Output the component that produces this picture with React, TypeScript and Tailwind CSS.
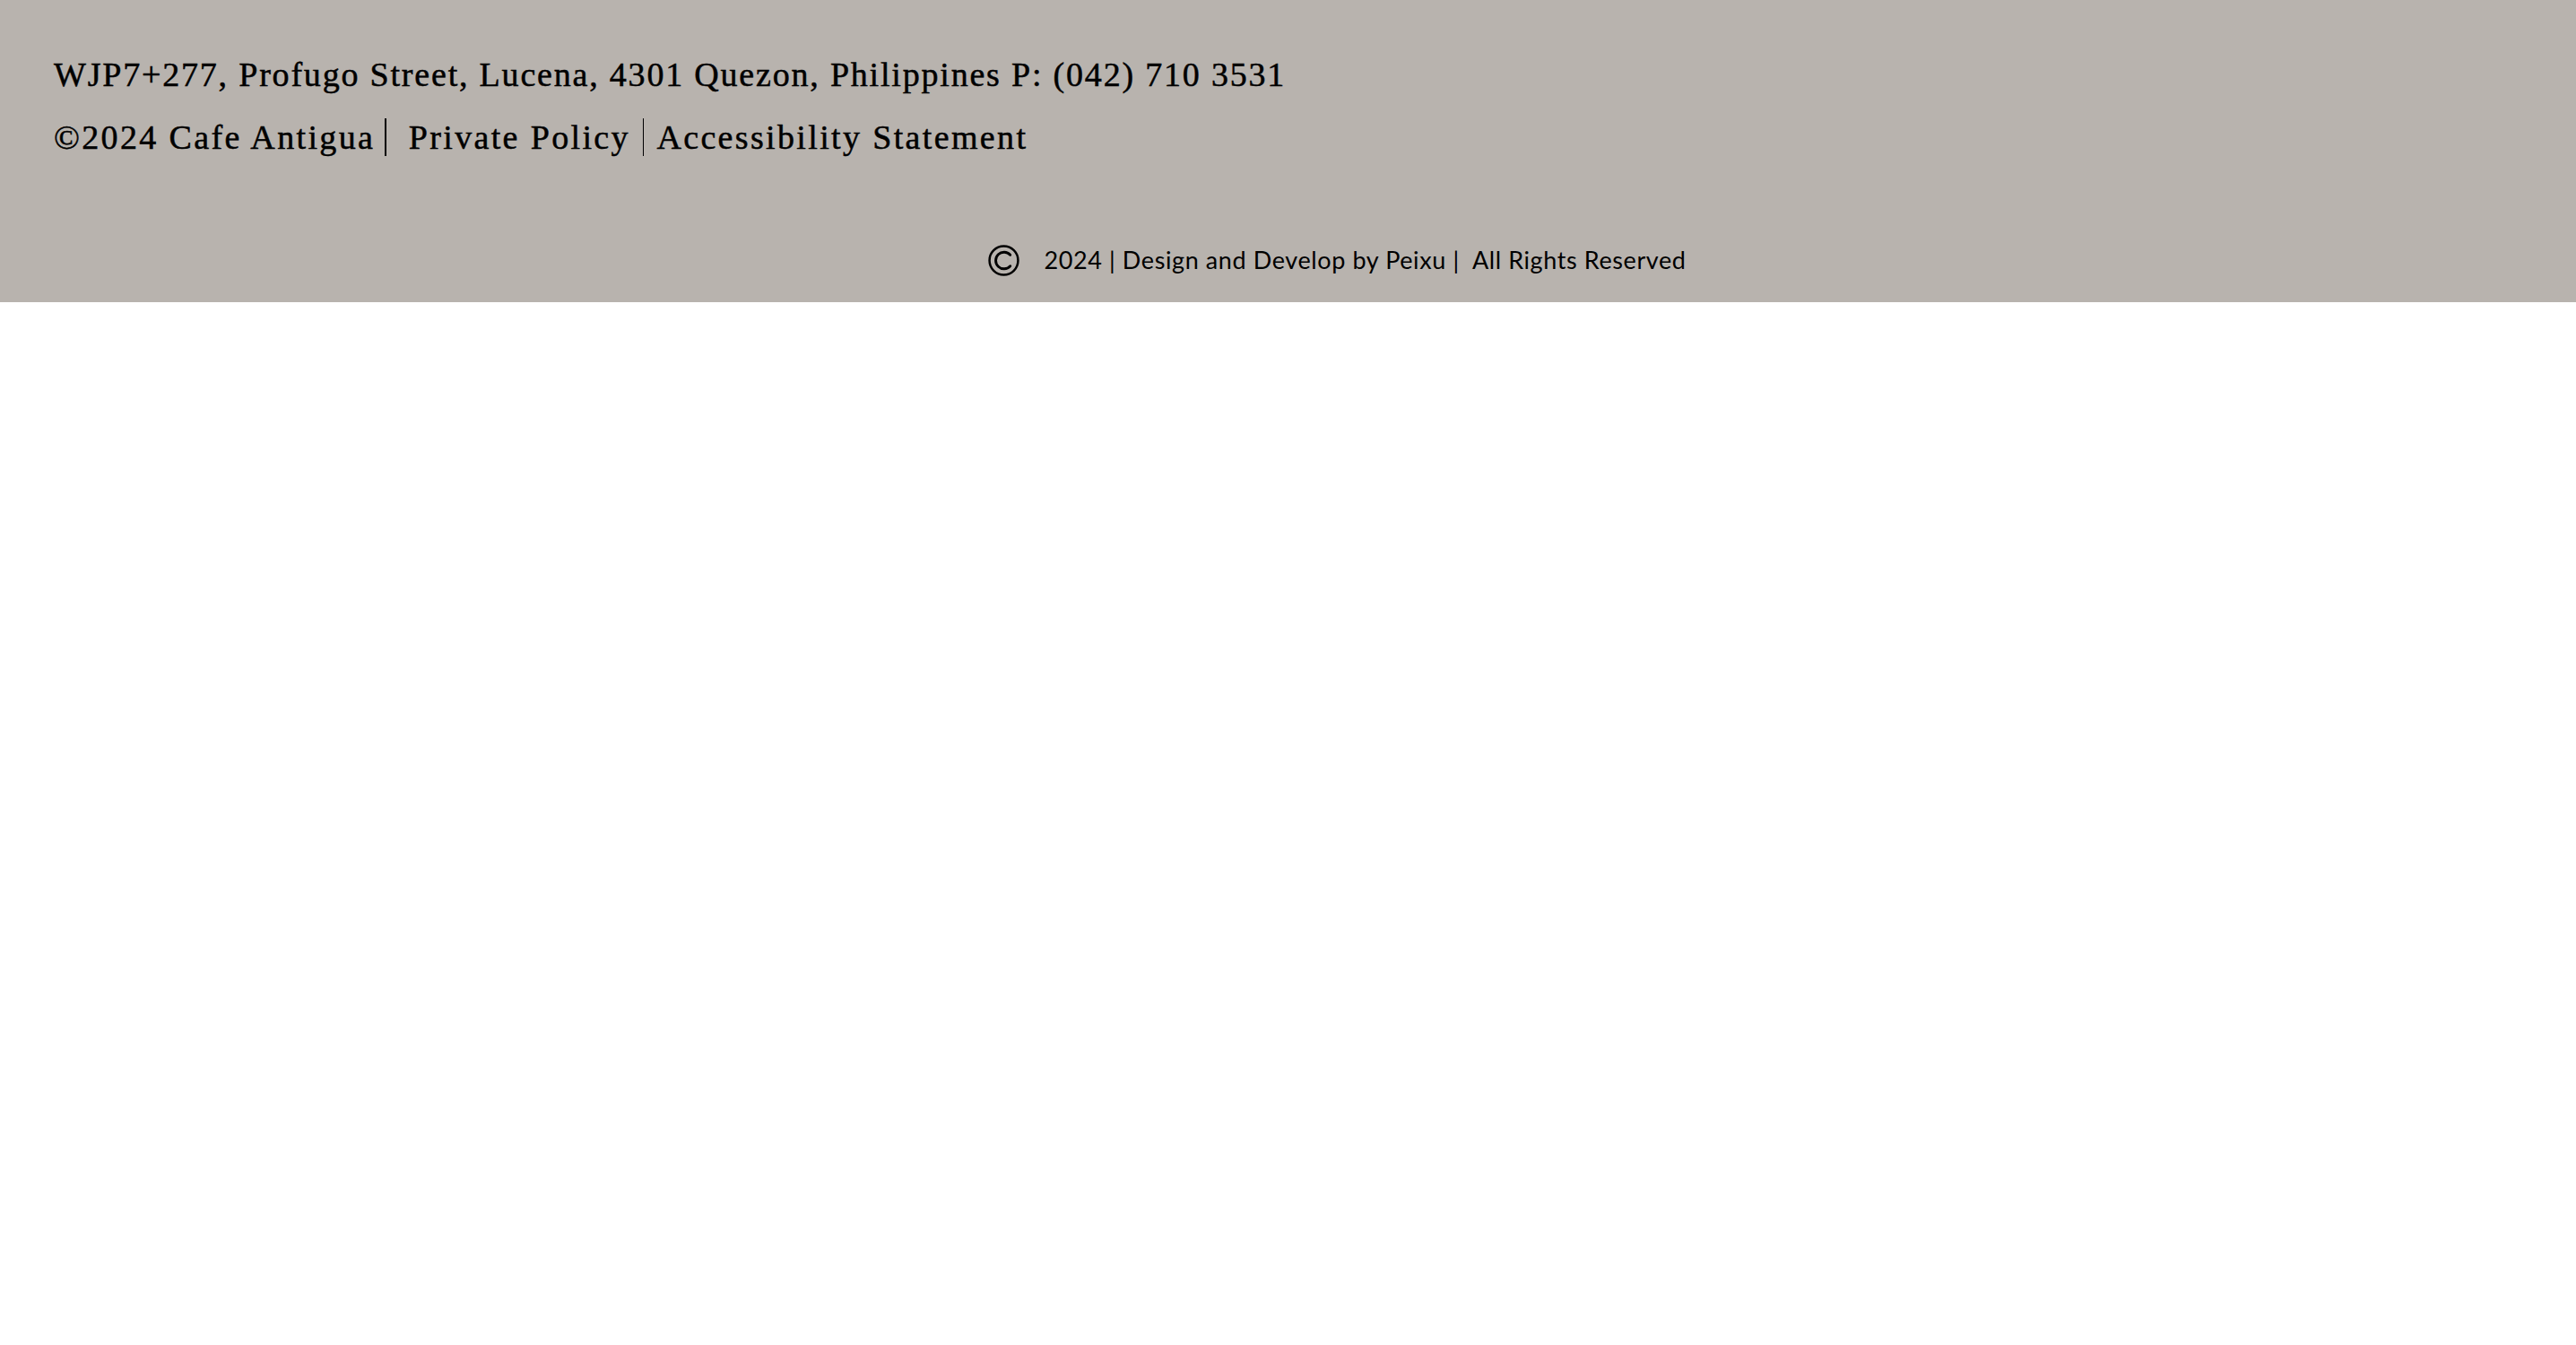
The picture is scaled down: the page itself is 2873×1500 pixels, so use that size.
export default function App() {
  return (
    <div className="min-h-screen bg-white">
      <footer className="bg-[#b8b3ae] text-black">
        <div className="pl-[60px] pt-[48px] font-['Liberation_Serif',serif] text-[38px] leading-[70px] tracking-[1.8px] [-webkit-text-stroke:0.5px_black]">
          <p>WJP7+277, Profugo Street, Lucena, 4301 Quezon, Philippines P: (042) 710 3531</p>
          <p className="flex items-center tracking-[2.35px]">
            <span>©2024 Cafe Antigua</span>
            <span className="ml-[11px] mr-[25px] h-[42px] w-[1.5px] bg-black" />
            <span>Private Policy</span>
            <span className="mx-[14px] h-[42px] w-[1.5px] bg-black" />
            <span>Accessibility Statement</span>
          </p>
        </div>
        <div className="mt-[82px] flex h-[40px] items-center justify-center pl-[110px] font-['Lato',sans-serif] text-[27px] tracking-[0.6px]">
          <svg viewBox="0 0 34 34" className="mr-[27px] h-[35px] w-[35px]" fill="none" stroke="currentColor" strokeWidth="2.4">
            <circle cx="17" cy="17" r="15.5" />
            <path d="M24 11a9 9 0 1 0 0 12" strokeLinecap="round" strokeWidth="2.8" />
          </svg>
          <span className="whitespace-pre">2024 | Design and Develop by Peixu |  All Rights Reserved</span>
        </div>
        <div className="h-[27px]" />
      </footer>
    </div>
  );
}
